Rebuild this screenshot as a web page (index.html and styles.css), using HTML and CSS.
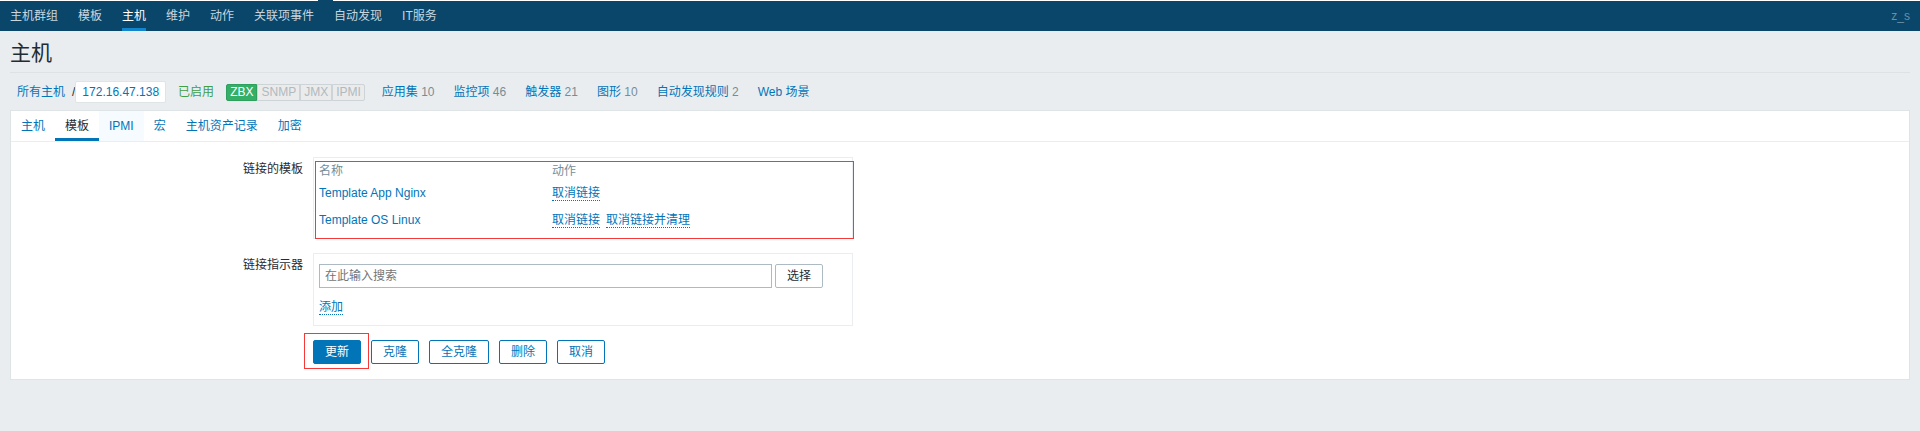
FILE: index.html
```html
<!DOCTYPE html>
<html lang="zh-CN">
<head>
<meta charset="utf-8">
<title>主机</title>
<link rel="stylesheet" href="styles.css">
</head>
<body>
<header class="top">
  <span class="top-notch"></span>
  <nav class="menu">
    <a href="#">主机群组</a>
    <a href="#">模板</a>
    <a href="#" class="current">主机</a>
    <a href="#">维护</a>
    <a href="#">动作</a>
    <a href="#">关联项事件</a>
    <a href="#">自动发现</a>
    <a href="#">IT服务</a>
  </nav>
  <span class="user">z_s</span>
</header>
<main class="page">
  <h1 class="title">主机</h1>
  <div class="object">
    <div class="crumbs"><a href="#">所有主机</a><span class="slash">/</span><a href="#" class="host">172.16.47.138</a></div>
    <span class="enabled">已启用</span>
    <div class="badges">
      <span class="badge on">ZBX</span><span class="badge">SNMP</span><span class="badge">JMX</span><span class="badge">IPMI</span>
    </div>
    <div class="counts">
      <span><a href="#">应用集</a> 10</span>
      <span><a href="#">监控项</a> 46</span>
      <span><a href="#">触发器</a> 21</span>
      <span><a href="#">图形</a> 10</span>
      <span><a href="#">自动发现规则</a> 2</span>
      <span><a href="#">Web 场景</a></span>
    </div>
  </div>
  <section class="panel">
    <nav class="tabs">
      <a href="#">主机</a>
      <a href="#" class="selected">模板</a>
      <a href="#" class="hovered">IPMI</a>
      <a href="#">宏</a>
      <a href="#">主机资产记录</a>
      <a href="#">加密</a>
    </nav>
    <form class="form">
      <span class="label">链接的模板</span>
      <div class="box linked">
        <table class="templates">
          <thead><tr><th>名称</th><th>动作</th></tr></thead>
          <tbody>
            <tr><td><a href="#">Template App Nginx</a></td><td><button type="button" class="link">取消链接</button></td></tr>
            <tr><td><a href="#">Template OS Linux</a></td><td><button type="button" class="link">取消链接</button><button type="button" class="link">取消链接并清理</button></td></tr>
          </tbody>
        </table>
        <span class="mark mark-table"></span>
      </div>
      <label class="label" for="search">链接指示器</label>
      <div class="box picker">
        <div class="search-row">
          <input id="search" class="search" type="text" placeholder="在此输入搜索">
          <button type="button" class="btn grey">选择</button>
        </div>
        <button type="button" class="link">添加</button>
      </div>
      <div class="actions">
        <span class="primary-wrap"><button type="submit" class="btn primary">更新</button><span class="mark mark-button"></span></span>
        <button type="button" class="btn">克隆</button>
        <button type="button" class="btn">全克隆</button>
        <button type="button" class="btn">删除</button>
        <button type="button" class="btn">取消</button>
      </div>
    </form>
  </section>
</main>
</body>
</html>
```
FILE: styles.css
```css
* {
  box-sizing: border-box;
}

body {
  margin: 0;
  background: #e9edf0;
  color: #1f2c33;
  font-family: "Liberation Sans", "Noto Sans CJK SC", sans-serif;
  font-size: 12px;
  line-height: 16px;
}

a {
  color: #0275b8;
  text-decoration: none;
}

button,
input {
  font: inherit;
}

.top {
  position: relative;
  display: flex;
  justify-content: space-between;
  padding: 0 10px;
  border-top: 1px solid #fff;
  background: #0a466a;
}

.top-notch {
  position: absolute;
  top: -1px;
  left: 318px;
  width: 15px;
  height: 1px;
  background: #0a466a;
}

.menu {
  display: flex;
  gap: 20px;
}

.menu a {
  padding: 7px 0 4px;
  border-bottom: 3px solid transparent;
  color: #c8d6df;
}

.menu .current {
  border-bottom-color: #1285cc;
  color: #fff;
}

.user {
  padding-top: 7px;
  color: #6b90a6;
}

.page {
  padding: 0 10px;
}

.title {
  margin: 0;
  padding: 10px 0 7px;
  border-bottom: 1px solid #dce2e5;
  font-size: 21px;
  font-weight: 400;
  line-height: 24px;
}

.object {
  display: flex;
  align-items: center;
  padding: 8px 7px 7px;
}

.crumbs {
  display: flex;
  align-items: center;
}

.slash {
  margin-left: 7px;
}

.host {
  padding: 2px 6px;
  border: 1px solid #dfe4e7;
  border-radius: 2px;
  background: #fff;
}

.enabled {
  margin-left: 12px;
  color: #429e47;
}

.badges {
  display: flex;
  margin-left: 12px;
}

.badge {
  padding: 0 3px;
  border: 1px solid #ccd4d8;
  background: #ebebeb;
  color: #afbabf;
  line-height: 15px;
}

.badge.on {
  border-color: #2f9f5e;
  border-radius: 2px 0 0 2px;
  background: #34af67;
  color: #fff;
}

.badge:last-child {
  border-radius: 0 2px 2px 0;
}

.counts {
  display: flex;
  gap: 19px;
  margin-left: 17px;
  color: #768d99;
}

.panel {
  border: 1px solid #dfe4e7;
  background: #fff;
}

.tabs {
  display: flex;
  border-bottom: 1px solid #ebeef0;
}

.tabs a {
  padding: 7px 10px 4px;
  border-bottom: 3px solid transparent;
}

.tabs .selected {
  border-bottom-color: #0275b8;
  color: #1f2c33;
}

.tabs .hovered {
  background: #f5fbff;
}

.form {
  display: grid;
  grid-template-columns: 292px minmax(0, 540px);
  column-gap: 10px;
  padding: 15px 0;
}

.label {
  padding-top: 4px;
  text-align: right;
}

.box {
  position: relative;
  margin-bottom: 14px;
  border: 1px solid #ebeef0;
  padding: 4px 5px 5px;
}

.templates {
  width: 100%;
  border-collapse: collapse;
}

.templates th,
.templates td {
  padding: 0;
  text-align: left;
}

.templates th {
  height: 17px;
  color: #768d99;
  font-weight: 400;
}

.templates th:first-child {
  width: 233px;
}

.templates td {
  height: 27px;
}

.link {
  margin: 0 6px 0 0;
  padding: 1px 0 0;
  border: 0;
  border-bottom: 1px dotted #0275b8;
  background: none;
  color: #0275b8;
  line-height: 14px;
}

.picker {
  padding: 10px 5px;
}

.search-row {
  display: flex;
  gap: 3px;
  margin-bottom: 11px;
}

.search {
  flex: 0 1 453px;
  min-width: 0;
  height: 24px;
  padding: 0 5px;
  border: 1px solid #acbbc2;
  background: #fff;
}

.search::placeholder {
  color: #757575;
}

.btn {
  height: 24px;
  padding: 0 11px;
  border: 1px solid #0275b8;
  border-radius: 2px;
  background: #fff;
  color: #0275b8;
}

.btn.grey {
  border-color: #acbbc2;
  color: #1f2c33;
}

.btn.primary {
  background: #0275b8;
  color: #fff;
}

.actions {
  grid-column: 2;
  display: flex;
  gap: 10px;
}

.primary-wrap {
  position: relative;
}

.mark {
  position: absolute;
  border: 1px solid #f53838;
  pointer-events: none;
}

.mark-table {
  inset: 3px -2px -1px 1px;
}

.mark-button {
  inset: -7px -8px -5px -9px;
}
```
